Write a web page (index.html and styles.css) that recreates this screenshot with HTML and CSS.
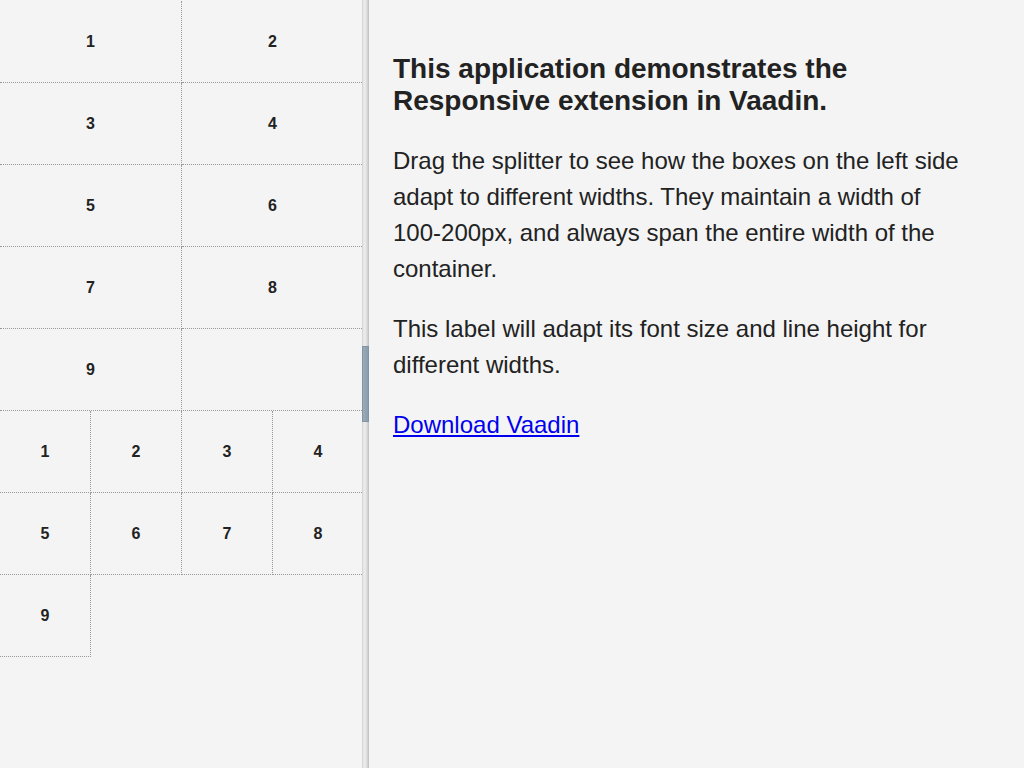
FILE: index.html
```html
<!DOCTYPE html>
<html>
<head>
<meta charset="utf-8">
<link rel="stylesheet" href="styles.css">
</head>
<body>
<div class="split">
  <div class="left">
    <div class="grid grid-half">
      <div class="box">1</div><div class="box">2</div>
      <div class="box">3</div><div class="box">4</div>
      <div class="box">5</div><div class="box">6</div>
      <div class="box">7</div><div class="box">8</div>
      <div class="box">9</div>
    </div>
    <div class="grid grid-quarter">
      <div class="box">1</div><div class="box">2</div><div class="box">3</div><div class="box">4</div>
      <div class="box">5</div><div class="box">6</div><div class="box">7</div><div class="box">8</div>
      <div class="box">9</div>
    </div>
  </div>
  <div class="splitter"><div class="handle"></div></div>
  <div class="right">
    <h1 class="title">This application demonstrates the Responsive extension in Vaadin.</h1>
    <p class="text">Drag the splitter to see how the boxes on the left side adapt to different widths. They maintain a width of 100-200px, and always span the entire width of the container.</p>
    <p class="text">This label will adapt its font size and line height for different widths.</p>
    <p class="text"><a class="link" href="#">Download Vaadin</a></p>
  </div>
</div>
</body>
</html>
```

FILE: styles.css
```css
html, body {
  margin: 0;
  padding: 0;
  height: 100%;
  background: #f4f4f4;
  font-family: "Liberation Sans", Arial, sans-serif;
  color: #222;
}
.split {
  display: flex;
  height: 768px;
  width: 1024px;
  overflow: hidden;
}
.left {
  width: 362px;
  flex: none;
  overflow: hidden;
  padding-top: 1px;
  box-sizing: border-box;
}
.grid {
  display: grid;
  width: 364px;
}
.grid-half {
  grid-template-columns: repeat(2, 1fr);
}
.grid-quarter {
  grid-template-columns: repeat(4, 1fr);
  border-top: 1px dotted #999;
  margin-top: -1px;
}
.box {
  height: 82px;
  box-sizing: border-box;
  border-right: 1px dotted #999;
  border-bottom: 1px dotted #999;
  display: flex;
  align-items: center;
  justify-content: center;
  font-weight: bold;
  font-size: 16px;
  color: #222;
}
.splitter {
  width: 7px;
  flex: none;
  position: relative;
  background: linear-gradient(to right, #c4c4c4 0, #e6e6e6 1px, #ececec 3px, #dadada 5px, #bdbdbd 7px);
  display: flex;
  align-items: center;
}
.handle {
  width: 7px;
  height: 76px;
  box-sizing: border-box;
  border: 1px solid #8094a6;
  background: linear-gradient(to right, #9aabba, #8b9cab);
}
.right {
  flex: 1;
  padding: 53px 56px 0 24px;
}
.title {
  margin: 0;
  font-size: 28px;
  line-height: 32px;
  font-weight: bold;
  color: #222;
}
.text {
  margin: 26px 0 0;
  font-size: 24px;
  line-height: 36px;
  color: #222;
}
.text + .text {
  margin-top: 24px;
}
.link {
  color: #0000ee;
  text-decoration: underline;
}
```
